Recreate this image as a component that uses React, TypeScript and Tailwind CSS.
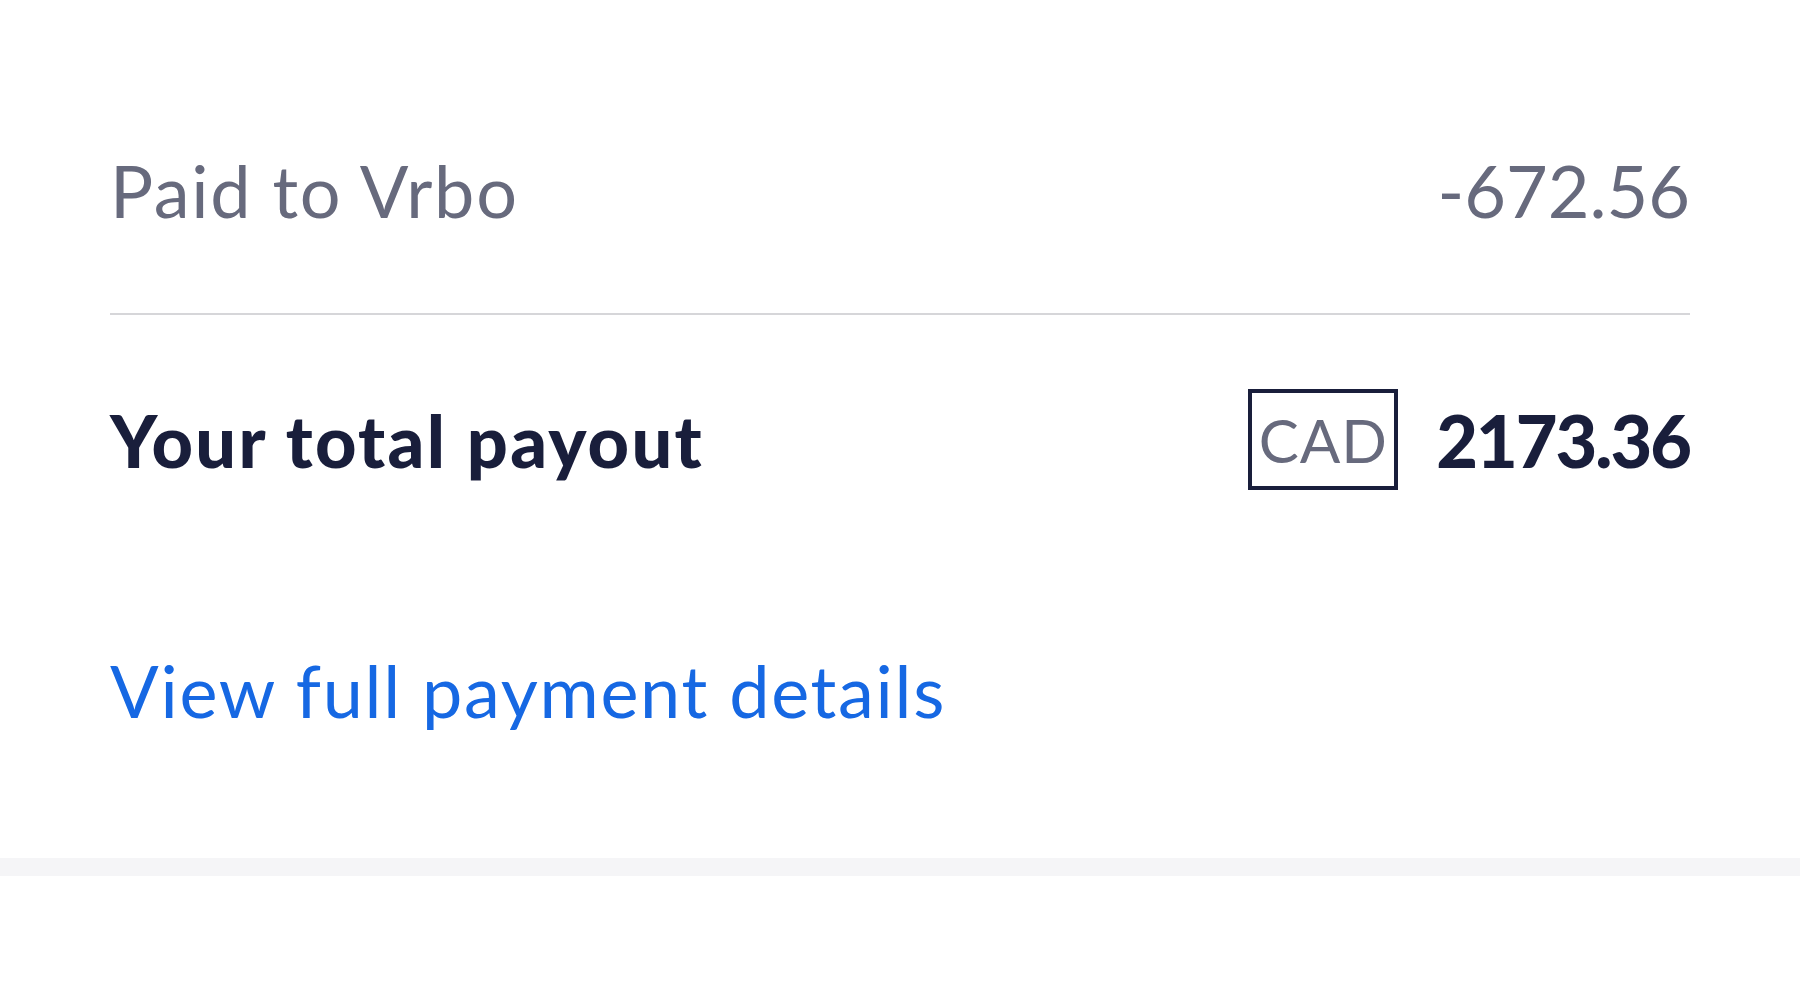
export default function App() {
  return (
    <div className="min-h-screen w-full bg-white font-['Lato','Liberation_Sans',sans-serif]">
      <div className="px-[110px] pt-[154px]">
        {/* Paid row */}
        <div className="flex items-center justify-between text-[72px] leading-[72px] text-[#676a7d]">
          <span className="tracking-[1.7px]">Paid to Vrbo</span>
          <span>-672.56</span>
        </div>

        <div className="mt-[87px] h-[2px] bg-[#d6d6d9]" />

        {/* Total row */}
        <div className="mt-[74px] flex items-center justify-between">
          <span className="text-[72px] font-black leading-[72px] tracking-[2.3px] text-[#191e3b]">
            Your total payout
          </span>
          <div className="flex items-center gap-[38px]">
            <span className="flex h-[101px] w-[150px] items-center justify-center border-[4px] border-[#191e3b] text-[60px] leading-none tracking-[1px] text-[#676a7d]">
              CAD
            </span>
            <span className="text-[72px] font-black leading-[72px] tracking-[-2px] text-[#191e3b]">
              2173.36
            </span>
          </div>
        </div>

        {/* Link */}
        <a
          href="#"
          className="mt-[164px] block text-[72px] leading-[72px] tracking-[1.7px] text-[#1668e3]"
        >
          View full payment details
        </a>
      </div>

      <div className="mt-[132px] h-[18px] bg-[#f5f5f7]" />
    </div>
  );
}
